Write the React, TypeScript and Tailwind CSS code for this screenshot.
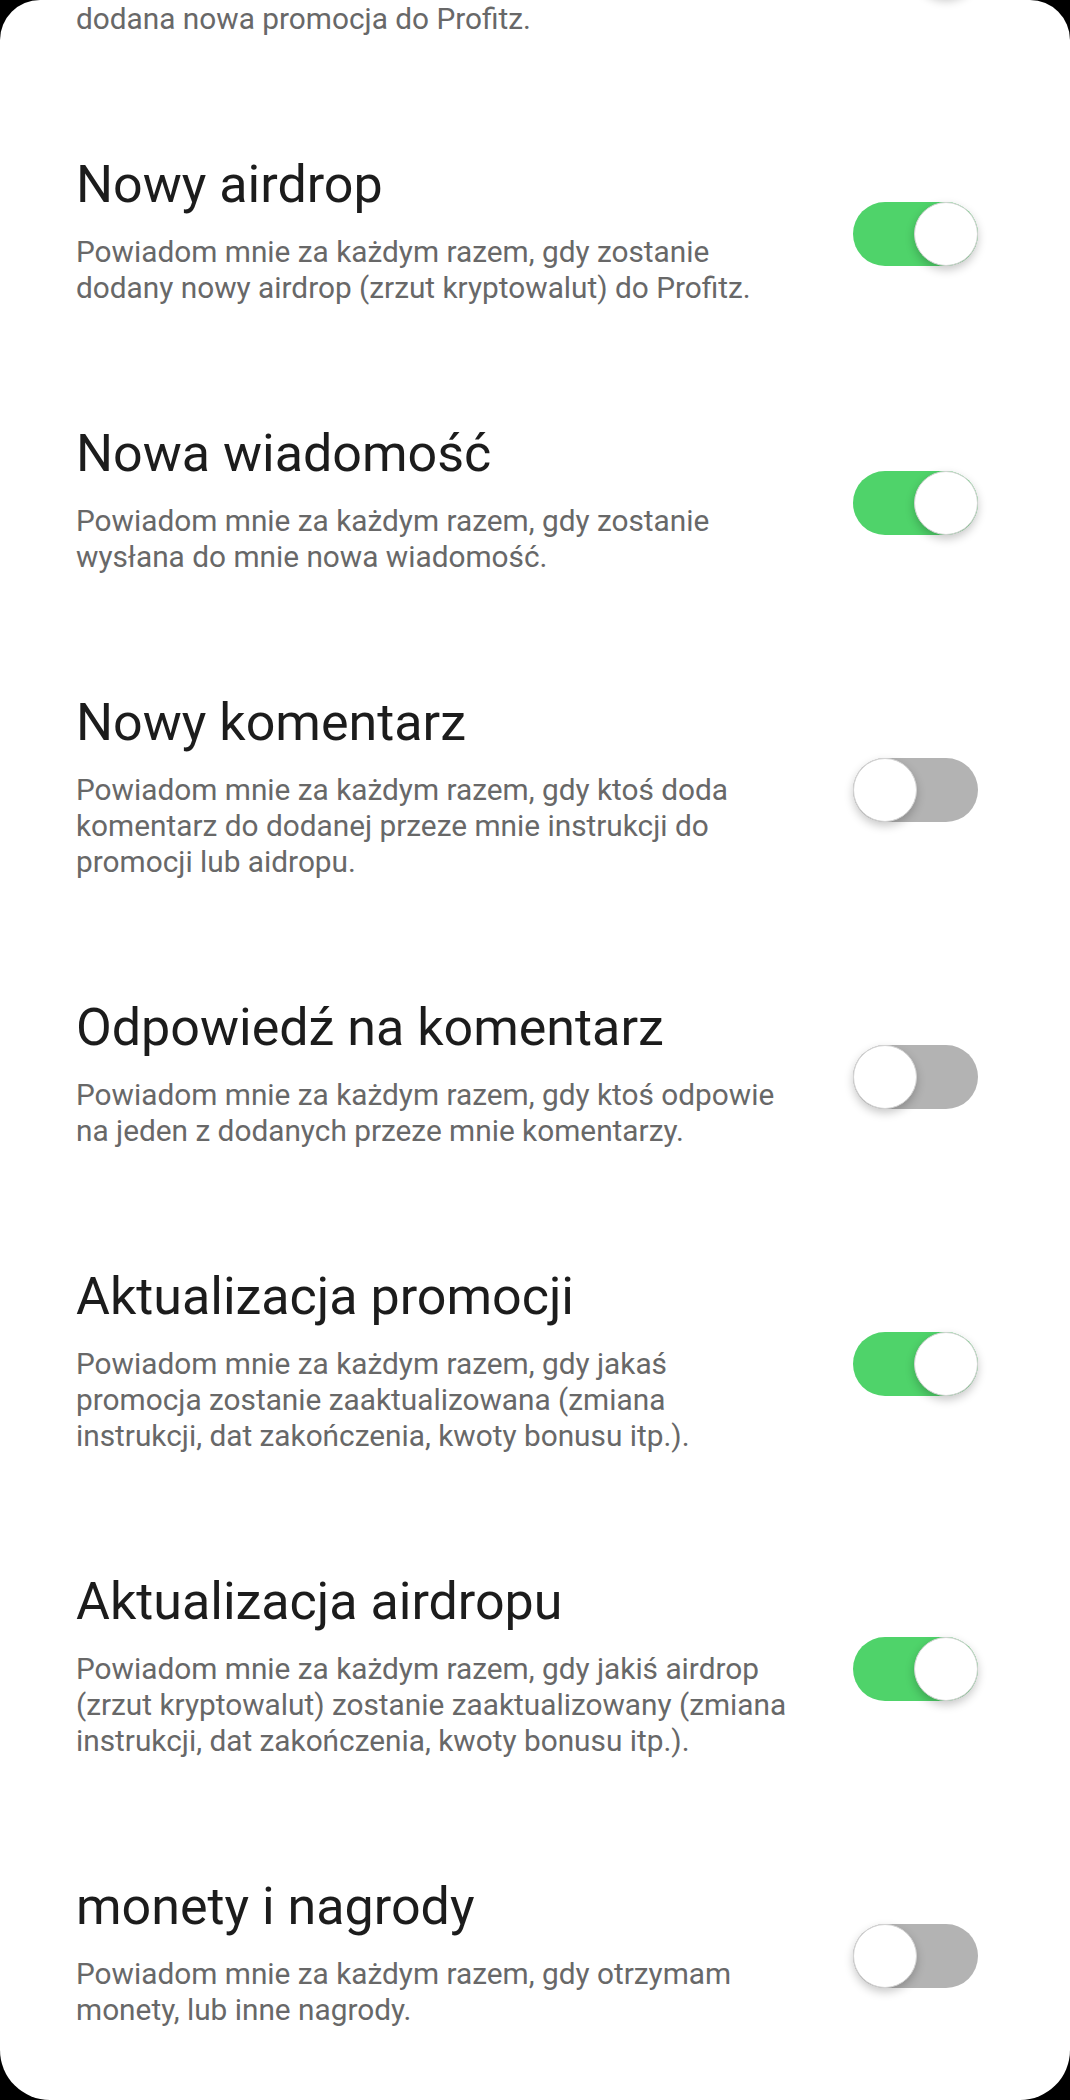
type Setting = {
  title: string
  lines: string[]
  on: boolean
}

const settings: Setting[] = [
  {
    title: 'Nowa promocja',
    lines: ['Powiadom mnie za każdym razem, gdy zostanie', 'dodana nowa promocja do Profitz.'],
    on: true,
  },
  {
    title: 'Nowy airdrop',
    lines: [
      'Powiadom mnie za każdym razem, gdy zostanie',
      'dodany nowy airdrop (zrzut kryptowalut) do Profitz.',
    ],
    on: true,
  },
  {
    title: 'Nowa wiadomość',
    lines: ['Powiadom mnie za każdym razem, gdy zostanie', 'wysłana do mnie nowa wiadomość.'],
    on: true,
  },
  {
    title: 'Nowy komentarz',
    lines: [
      'Powiadom mnie za każdym razem, gdy ktoś doda',
      'komentarz do dodanej przeze mnie instrukcji do',
      'promocji lub aidropu.',
    ],
    on: false,
  },
  {
    title: 'Odpowiedź na komentarz',
    lines: [
      'Powiadom mnie za każdym razem, gdy ktoś odpowie',
      'na jeden z dodanych przeze mnie komentarzy.',
    ],
    on: false,
  },
  {
    title: 'Aktualizacja promocji',
    lines: [
      'Powiadom mnie za każdym razem, gdy jakaś',
      'promocja zostanie zaaktualizowana (zmiana',
      'instrukcji, dat zakończenia, kwoty bonusu itp.).',
    ],
    on: true,
  },
  {
    title: 'Aktualizacja airdropu',
    lines: [
      'Powiadom mnie za każdym razem, gdy jakiś airdrop',
      '(zrzut kryptowalut) zostanie zaaktualizowany (zmiana',
      'instrukcji, dat zakończenia, kwoty bonusu itp.).',
    ],
    on: true,
  },
  {
    title: 'monety i nagrody',
    lines: ['Powiadom mnie za każdym razem, gdy otrzymam', 'monety, lub inne nagrody.'],
    on: false,
  },
]

function Toggle({ on }: { on: boolean }) {
  return (
    <div
      className={
        on
          ? 'mt-[7px] flex h-[64px] w-[125px] shrink-0 justify-end rounded-full bg-[#4fd36a]'
          : 'mt-[7px] flex h-[64px] w-[125px] shrink-0 justify-start rounded-full bg-[#b3b3b3]'
      }
    >
      <div className="h-[64px] w-[64px] rounded-full border border-[#d4d4d4] bg-white shadow-[0_4px_10px_rgba(0,0,0,0.22)]" />
    </div>
  )
}

export default function App() {
  return (
    <div className="min-h-[2100px] bg-black font-['Roboto','Noto_Sans',sans-serif]">
      <div className="h-[2100px] overflow-hidden rounded-t-[40px] rounded-b-[50px] bg-white">
        <div className="-mt-[173px] flex flex-col">
          {settings.map((s) => (
            <div key={s.title} className="flex items-center py-[59px] pl-[76px] pr-[92px]">
              <div className="flex-1">
                <h2 className="text-[52px] leading-[60px] font-normal text-[#1c1c1c]">{s.title}</h2>
                <p className="mt-[19px] text-[29.8px] leading-[36px] text-[#686868]">
                  {s.lines.map((line) => (
                    <span key={line} className="block whitespace-nowrap">
                      {line}
                    </span>
                  ))}
                </p>
              </div>
              <Toggle on={s.on} />
            </div>
          ))}
        </div>
      </div>
    </div>
  )
}
